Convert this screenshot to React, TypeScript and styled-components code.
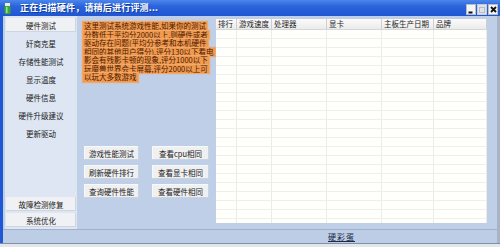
import React from "react";
import styled, { createGlobalStyle } from "styled-components";

const GlobalStyle = createGlobalStyle`
  html, body { margin: 0; padding: 0; width: 500px; height: 247px; overflow: hidden; background: #ffffff; }
  #root { width: 500px; height: 247px; }
  * { box-sizing: border-box; }
`;

const FONT = `"Noto Sans CJK SC", "Noto Sans", sans-serif`;

const Window = styled.div`
  width: 500px;
  height: 247px;
  display: flex;
  flex-direction: column;
  font-family: ${FONT};
  background: #bfcfe7;
`;

const TitleBar = styled.div`
  height: 16px;
  flex: none;
  display: flex;
  align-items: center;
  padding: 0 2px 0 4px;
  background: linear-gradient(#4a86ea 0%, #2a63dc 40%, #1f56d2 100%);
`;

const TitleIcon = styled.svg`
  width: 7px;
  height: 11px;
  flex: none;
`;

const TitleText = styled.div`
  margin-left: 9px;
  color: #ffffff;
  font-size: 9px;
  font-weight: 700;
  line-height: 16px;
  letter-spacing: 0.2px;
  text-shadow: 1px 1px 0 #123c9c;
  flex: 1;
  white-space: nowrap;
`;

const Controls = styled.div`
  display: flex;
  gap: 1px;
  align-self: flex-end;
  margin-bottom: 1px;
`;

const CtrlButton = styled.div<{ $dim?: boolean }>`
  width: 10px;
  height: 11px;
  background: ${(p) => (p.$dim ? "#dfe3e8" : "#f4f4f4")};
  border: 1px solid ${(p) => (p.$dim ? "#c6ccd4" : "#b8bec8")};
  display: flex;
  align-items: center;
  justify-content: center;
`;

const Frame = styled.div`
  flex: 1;
  display: flex;
  flex-direction: column;
  border-left: 3px solid #1f57d4;
  border-right: 3px solid #a8b4c6;
  min-height: 0;
`;

const Body = styled.div`
  flex: 1;
  display: flex;
  min-height: 0;
`;

const Sidebar = styled.div`
  width: 72px;
  margin-left: 2px;
  flex: none;
  background: #dde6f2;
  display: flex;
  flex-direction: column;
  justify-content: space-between;
  padding: 2px 1px 2px 1px;
`;

const NavGroup = styled.div<{ $gap: number }>`
  display: flex;
  flex-direction: column;
  gap: ${(p) => p.$gap}px;
`;

const NavItem = styled.div<{ $boxed?: boolean }>`
  height: 14px;
  display: flex;
  align-items: center;
  justify-content: center;
  font-size: 7.5px;
  color: #1a1a1a;
  white-space: nowrap;
  background: ${(p) => (p.$boxed ? "#f0f1f4" : "transparent")};
  box-shadow: ${(p) => (p.$boxed ? "inset -1px -1px 0 #cfd5de" : "none")};
`;

const Middle = styled.div`
  width: 139px;
  flex: none;
  display: flex;
  flex-direction: column;
  padding: 6px 6px 31px 6px;
`;

const Notice = styled.div`
  display: flex;
  flex-direction: column;
`;

const NoticeLine = styled.div`
  height: 8.5px;
  display: flex;
  white-space: nowrap;
`;

const Mark = styled.span`
  display: block;
  height: 8.5px;
  line-height: 8.5px;
  font-size: 7.5px;
  background: #f09a50;
  color: #4a1800;
  padding: 0 1px;
  box-shadow: 0 0 1px 1px #f4a868;
`;

const ButtonGrid = styled.div`
  margin-top: auto;
  margin-left: 1px;
  display: grid;
  grid-template-columns: 55px 57px;
  grid-auto-rows: 14px;
  column-gap: 13px;
  row-gap: 5px;
`;

const ActionButton = styled.div`
  background: #eff0f2;
  box-shadow: inset -1px -1px 0 #cdd3dc, inset 1px 1px 0 #f9f9fa;
  display: flex;
  align-items: center;
  justify-content: center;
  font-size: 7.5px;
  color: #1a1a1a;
  white-space: nowrap;
`;

const TableWrap = styled.div`
  width: 271px;
  flex: none;
  margin: 3px 0 6px 0;
  background: #fffffb;
  overflow: hidden;
  display: flex;
  flex-direction: column;
`;

const COLS = "21px 35px 55px 55px 52px 53px";

const HeaderRow = styled.div`
  display: grid;
  grid-template-columns: ${COLS};
  height: 11px;
  flex: none;
  background: linear-gradient(#fbfbfb, #ebebeb);
  border-bottom: 1px solid #d6d6d6;
`;

const HeaderCell = styled.div`
  font-size: 7.5px;
  line-height: 10px;
  color: #1e1e1e;
  padding-left: 2px;
  border-right: 1px solid #cfcfcf;
  white-space: nowrap;
  overflow: hidden;
`;

const DataRow = styled.div`
  display: grid;
  grid-template-columns: ${COLS};
  height: 9px;
  flex: none;
  border-bottom: 1px solid #f0eeea;
`;

const DataCell = styled.div`
  border-right: 1px solid #ecebe8;
`;

const StatusBar = styled.div`
  height: 14px;
  flex: none;
  border-top: 1px solid #9fb1cb;
  background: #bdcde6;
  display: flex;
  align-items: center;
  padding-left: 325px;
`;

const StatusLink = styled.span`
  font-size: 8px;
  color: #1c2a44;
  text-decoration: underline;
  letter-spacing: 1px;
`;

const BottomEdge = styled.div`
  height: 4px;
  flex: none;
  border-top: 1px solid #7f8fa8;
  background: #e3e6ea;
`;

const navTop = ["硬件测试", "奸商克星", "存储性能测试", "显示温度", "硬件信息", "硬件升级建议", "更新驱动"];
const navBottom = ["故障检测修复", "系统优化"];
const notice = [
  "这里测试系统游戏性能,如果你的测试",
  "分数低于平均分2000以上,则硬件或者",
  "驱动存在问题(平均分参考和本机硬件",
  "相同的其他用户得分),评分130以下看电",
  "影会有残影卡顿的现象,评分1000以下",
  "玩魔兽世界会卡屏幕,评分2000以上可",
  "以玩大多数游戏",
];
const actions = ["游戏性能测试", "查看cpu相同", "刷新硬件排行", "查看显卡相同", "查询硬件性能", "查看硬件相同"];
const headers = ["排行", "游戏速度", "处理器", "显卡", "主板生产日期", "品牌"];

export default function App() {
  return (
    <>
      <GlobalStyle />
      <Window>
        <TitleBar>
          <TitleIcon viewBox="0 0 7 11">
            <rect x="1" y="0" width="5" height="3" fill="#e8f0e0" />
            <rect x="0.5" y="3" width="6" height="8" rx="1" fill="#3fa63a" />
            <rect x="2" y="4" width="1.5" height="6" fill="#9fe08a" />
          </TitleIcon>
          <TitleText>正在扫描硬件，请稍后进行评测...</TitleText>
          <Controls>
            <CtrlButton>
              <svg width="6" height="8" viewBox="0 0 6 8">
                <rect x="0.5" y="5.5" width="4" height="2" fill="#111" />
              </svg>
            </CtrlButton>
            <CtrlButton $dim>
              <svg width="6" height="6" viewBox="0 0 6 6">
                <rect x="0.5" y="0.5" width="5" height="5" fill="none" stroke="#b5bcc6" />
              </svg>
            </CtrlButton>
            <CtrlButton>
              <svg width="7" height="7" viewBox="0 0 7 7">
                <path d="M1 1 L6 6 M6 1 L1 6" stroke="#111" strokeWidth="1.8" />
              </svg>
            </CtrlButton>
          </Controls>
        </TitleBar>
        <Frame>
          <Body>
            <Sidebar>
              <NavGroup $gap={4}>
                {navTop.map((t, i) => (
                  <NavItem key={t} $boxed={i === 0}>
                    {t}
                  </NavItem>
                ))}
              </NavGroup>
              <NavGroup $gap={2}>
                {navBottom.map((t) => (
                  <NavItem key={t} $boxed>
                    {t}
                  </NavItem>
                ))}
              </NavGroup>
            </Sidebar>
            <Middle>
              <Notice>
                {notice.map((l) => (
                  <NoticeLine key={l}>
                    <Mark>{l}</Mark>
                  </NoticeLine>
                ))}
              </Notice>
              <ButtonGrid>
                {actions.map((a) => (
                  <ActionButton key={a}>{a}</ActionButton>
                ))}
              </ButtonGrid>
            </Middle>
            <TableWrap>
              <HeaderRow>
                {headers.map((h) => (
                  <HeaderCell key={h}>{h}</HeaderCell>
                ))}
              </HeaderRow>
              {Array.from({ length: 22 }).map((_, r) => (
                <DataRow key={r}>
                  {headers.map((h) => (
                    <DataCell key={h} />
                  ))}
                </DataRow>
              ))}
            </TableWrap>
          </Body>
          <StatusBar>
            <StatusLink>硬彩蛋</StatusLink>
          </StatusBar>
        </Frame>
        <BottomEdge />
      </Window>
    </>
  );
}
